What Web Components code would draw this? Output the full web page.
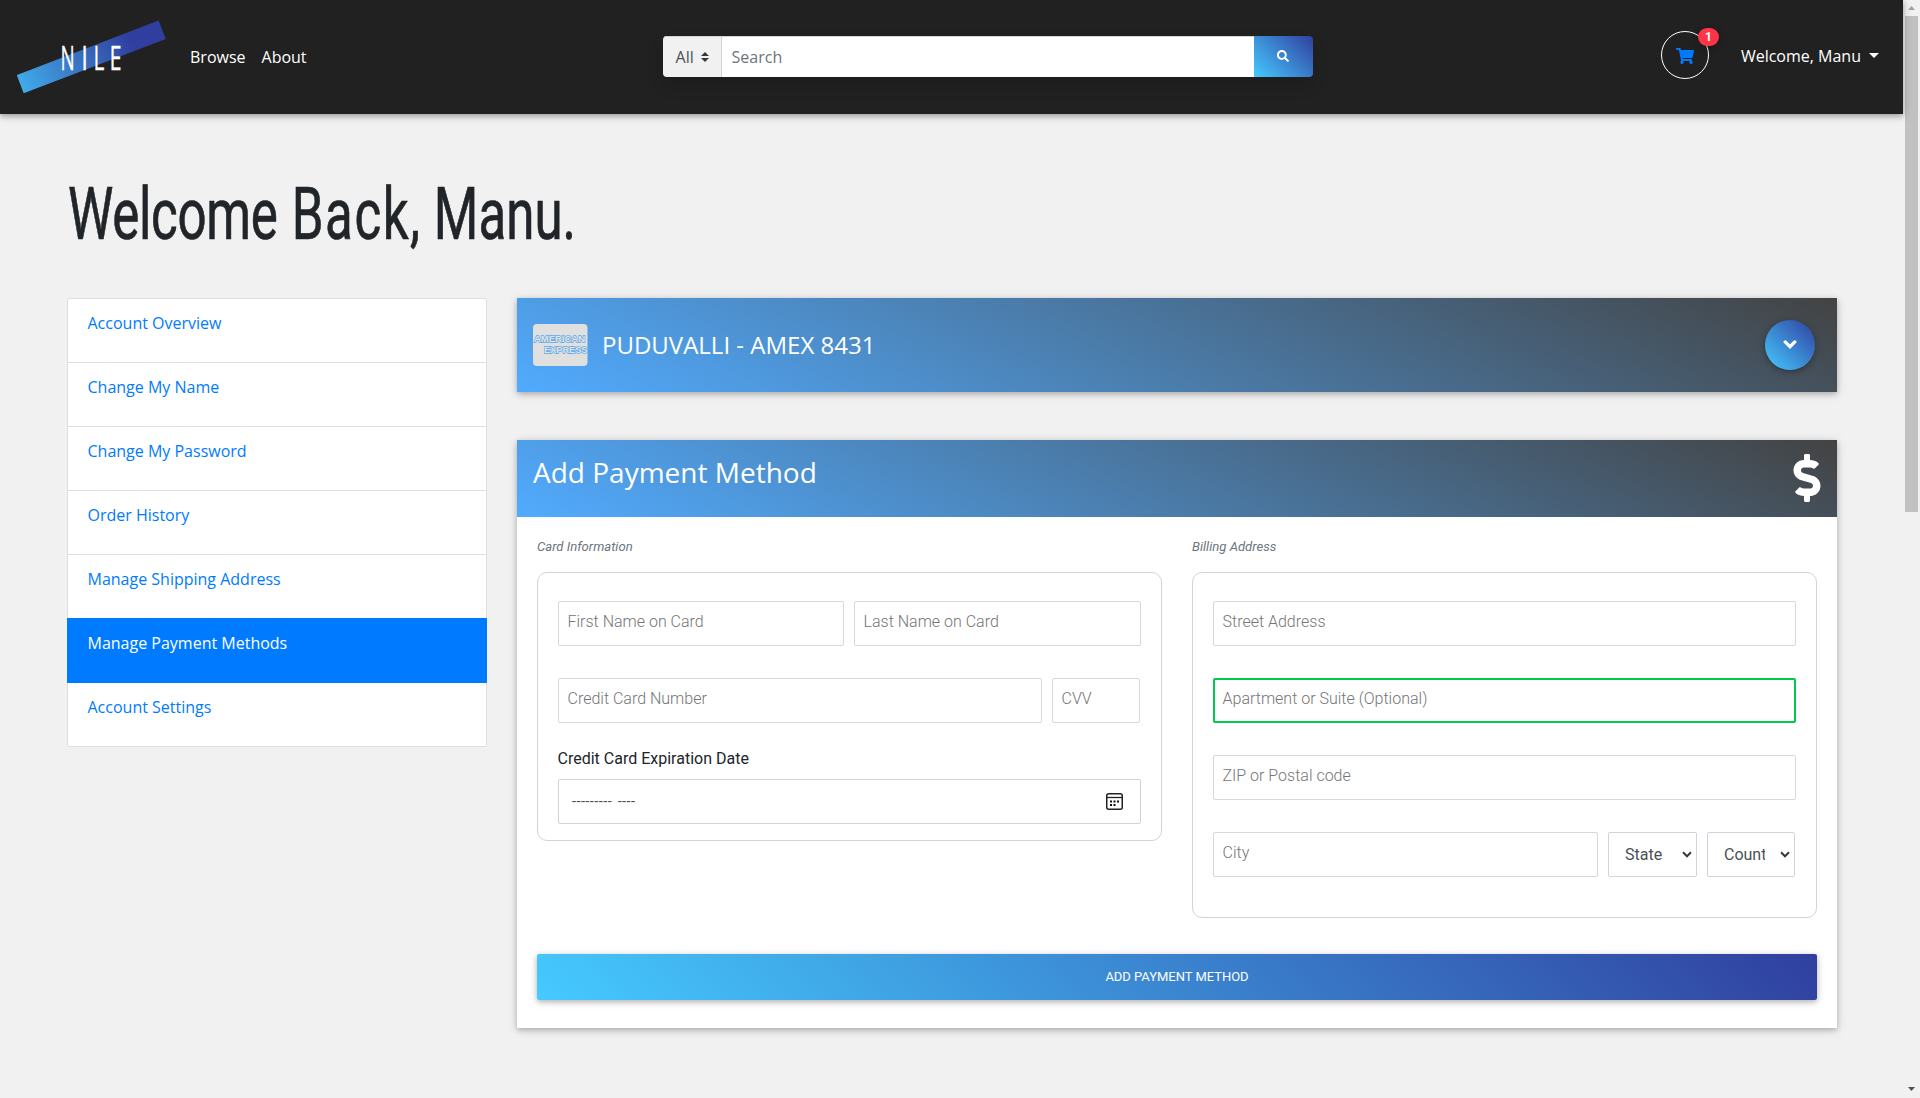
<!DOCTYPE html>
<html lang="en">
<head>
<meta charset="utf-8">
<title>Nile - Manage Payment Methods</title>
<style>
html,body{margin:0;height:100%}
body{display:flex;height:1098px;overflow:hidden;background:#f1f1f1;color:#212529;font:400 16px/24px "Open Sans",sans-serif}
.page{flex:1;min-width:0}
.columns{display:flex;gap:30px;align-items:flex-start;margin:0 66px 0 67px}
.content{flex:1;display:flex;flex-direction:column;gap:48px}
.forms{display:flex;gap:30px;align-items:flex-start}
.forms field-group{flex:1}
</style>
</head>
<body>
<div class="page">
  <nile-header>
    <nav-link slot="nav">Browse</nav-link><nav-link slot="nav">About</nav-link>
    <search-bar slot="search" category="All">Search</search-bar>
    <cart-button slot="account" count="1"></cart-button>
    <user-menu slot="account">Welcome, Manu</user-menu>
  </nile-header>
  <page-title></page-title>
  <div class="columns">
    <account-nav>
      <account-item>Account Overview</account-item>
      <account-item>Change My Name</account-item>
      <account-item>Change My Password</account-item>
      <account-item>Order History</account-item>
      <account-item>Manage Shipping Address</account-item>
      <account-item active>Manage Payment Methods</account-item>
      <account-item>Account Settings</account-item>
    </account-nav>
    <div class="content">
      <saved-card>PUDUVALLI - AMEX 8431</saved-card>
      <payment-panel>
        <span slot="title">Add Payment Method</span>
        <div class="forms">
          <field-group label="Card Information" style="--foot:16px">
            <field-row><text-field style="flex:286">First Name on Card</text-field><text-field style="flex:287">Last Name on Card</text-field></field-row>
            <field-row><text-field style="flex:1">Credit Card Number</text-field><text-field style="flex:0 0 88px;margin-right:1px">CVV</text-field></field-row>
            <month-field label="Credit Card Expiration Date">--------- ----</month-field>
          </field-group>
          <field-group label="Billing Address" style="--foot:40px">
            <field-row><text-field>Street Address</text-field></field-row>
            <field-row><text-field valid>Apartment or Suite (Optional)</text-field></field-row>
            <field-row><text-field>ZIP or Postal code</text-field></field-row>
            <field-row><text-field>City</text-field><select-field style="flex:0 0 89px">State</select-field><select-field style="flex:0 0 88px;margin-right:1px">Country</select-field></field-row>
          </field-group>
        </div>
        <submit-button slot="action">Add Payment Method</submit-button>
      </payment-panel>
    </div>
  </div>
</div>
<page-scrollbar></page-scrollbar>
<script>
const define = (name, render) => customElements.define(name, class extends HTMLElement {
  constructor() { super(); this.attachShadow({ mode: 'open' }); }
  connectedCallback() { this.shadowRoot.innerHTML = render(this); }
});
const SHADOW = 'box-shadow:0 2px 5px rgba(0,0,0,.2),0 2px 10px rgba(0,0,0,.14)';

define('nile-header', () => `<style>
:host{display:flex;align-items:center;height:114px;box-sizing:border-box;background:#212121;color:#fff;position:relative;padding:0 24px 0 17px;box-shadow:0 2px 5px rgba(0,0,0,.26),0 2px 10px rgba(0,0,0,.16)}
nav{display:flex;gap:16px;margin-left:24px}
.account{display:flex;align-items:center;gap:32px;margin-left:auto}
.search{margin-left:356px}
</style><nile-logo></nile-logo><nav><slot name="nav"></slot></nav><div class="search"><slot name="search"></slot></div><div class="account"><slot name="account"></slot></div>`);

define('nile-logo', () => `<style>:host{display:block;height:74px;width:149px}svg{display:block}text{font-family:"Open Sans",sans-serif;font-weight:500}</style>
<svg width="149" height="74" viewBox="17 20 149 74"><defs><linearGradient id="g" gradientUnits="userSpaceOnUse" x1="20" y1="96" x2="128" y2="36"><stop offset="0" stop-color="#42b0ec"/><stop offset="1" stop-color="#303f9f"/></linearGradient></defs>
<path d="M16.700 75 158.600 20.500 165.700 39 23.700 93.300Z" fill="url(#g)"/>
<g fill="#fff" stroke="#fff" stroke-width=".3" font-size="32.500"><text transform="translate(60.600 69.700) scale(.58 1)">N</text><text transform="translate(81.200 69.700) scale(.74 1)">I</text><text transform="translate(93.600 69.700) scale(.64 1)">L</text><text transform="translate(109.500 69.700) scale(.67 1)">E</text></g></svg>`);

define('nav-link', () => `<style>:host{display:block;white-space:nowrap}</style><slot></slot>`);

define('search-bar', el => `<style>
:host{display:flex;width:650px;height:41px;margin-bottom:2px;border-radius:4px;box-shadow:0 8px 16px rgba(0,0,0,.15);color:#495057;overflow:hidden}
.cat{display:flex;align-items:center;gap:7px;width:59px;padding-left:13px;background:#f1f1f1;border:1px solid #ced4da;border-width:1px 1px 0 0;box-sizing:border-box}
.input{flex:1;display:flex;align-items:center;padding-left:10px;background:#fff;color:#6c757d;border-top:1px solid #ced4da}
.go{width:59px;display:flex;align-items:center;justify-content:center;background:linear-gradient(45deg,#45caff,#303f9f)}
</style><div class="cat"><span>${el.getAttribute('category')}</span><svg width="8" height="10" viewBox="0 0 4 5"><path fill="#343a40" d="M2 0 0 2h4zm0 5L0 3h4z"/></svg></div><div class="input"><slot></slot></div>
<div class="go"><svg width="12" height="12" viewBox="0 0 512 512"><path fill="#fff" d="M505 442.700L405.300 343c-4.500-4.500-10.600-7-17-7H372c27.600-35.300 44-79.700 44-128C416 93.100 322.900 0 208 0S0 93.100 0 208s93.100 208 208 208c48.300 0 92.700-16.400 128-44v16.300c0 6.400 2.500 12.500 7 17l99.700 99.700c9.400 9.400 24.600 9.400 33.900 0l28.300-28.300c9.400-9.400 9.400-24.600.1-34zM208 336c-70.700 0-128-57.200-128-128 0-70.700 57.200-128 128-128 70.700 0 128 57.200 128 128 0 70.700-57.200 128-128 128z"/></svg></div>`);

define('cart-button', el => `<style>
:host{display:flex;align-items:center;justify-content:center;position:relative;width:46px;height:46px;border:1px solid #fff;border-radius:50%;margin-bottom:4px}
.badge{position:absolute;left:36px;top:-4px;width:21px;height:18px;border-radius:9px;background:#ff3547;font:700 12px/18px Roboto,sans-serif;text-align:center;box-shadow:0 2px 5px rgba(0,0,0,.16),0 2px 10px rgba(0,0,0,.12)}
svg{margin-top:2px}
</style><svg width="18" height="16" viewBox="0 0 576 512"><path fill="#007bff" d="M528.12 301.319l47.273-208C578.806 78.301 567.391 64 551.990 64H159.208l-9.166-44.810C147.758 8.021 137.930 0 126.529 0H24C10.745 0 0 10.745 0 24v16c0 13.255 10.745 24 24 24h69.883l70.248 343.435C147.325 417.100 136 435.222 136 456c0 30.928 25.072 56 56 56s56-25.072 56-56c0-15.674-6.447-29.835-16.824-40h209.647C430.447 426.165 424 440.326 424 456c0 30.928 25.072 56 56 56s56-25.072 56-56c0-22.172-12.888-41.332-31.579-50.405l5.517-24.276c3.413-15.018-8.002-29.319-23.403-29.319H218.117l-6.545-32h293.145c11.206 0 20.920-7.754 23.403-18.681z"/></svg><span class="badge">${el.getAttribute('count')}</span>`);

define('user-menu', () => `<style>:host{display:flex;align-items:center;gap:8px;margin-bottom:2px;white-space:nowrap}i{border:5px solid transparent;border-top-color:#fff;border-bottom:0;margin-top:-2px}</style><slot></slot><i></i>`);

define('page-title', () => `<style>:host{display:block;margin:55px 0 49px 67px}h1{margin:0;font:400 73px/80px Roboto,sans-serif;height:80px}svg{display:block;overflow:visible}</style>
<h1><svg width="520" height="80"><text transform="scale(.7 1)" y="70" fill="#212529" stroke="#212529" stroke-width=".7"><tspan x="1.500" letter-spacing="-.5">Welcome</tspan> <tspan x="321" letter-spacing="2.200">Back,</tspan> <tspan x="524">Manu.</tspan></text></svg></h1>`);

define('account-nav', () => `<style>:host{display:flex;flex-direction:column;width:418px;border:1px solid #dfdfdf;border-radius:2px;background:#fff}</style><slot></slot>`);
define('account-item', () => `<style>
:host{display:block;height:64px;box-sizing:border-box;padding:12px 19.500px;border-bottom:1px solid #dfdfdf;color:#007bff}
:host(:last-child){border:0;height:63px}
:host([active]){background:#007bff;color:#fff;height:65px;margin:-1px -1px 0;padding:13px 20.500px;border-color:#007bff}
</style><slot></slot>`);

define('saved-card', () => `<style>
:host{display:flex;align-items:center;height:94px;box-sizing:border-box;padding:0 22px 0 16px;background:linear-gradient(25deg,#51abff,#434343);color:#fff;${SHADOW}}
.name{margin-left:14px;font-size:24px;line-height:30px;flex:1}
.toggle{width:50px;height:50px;border-radius:50%;display:flex;align-items:center;justify-content:center;background:linear-gradient(45deg,#45caff,#303f9f);${SHADOW}}
text{font:700 9.500px "Liberation Sans",sans-serif;fill:#e4e4e4;stroke:#5ba8ea;stroke-width:1.300px;paint-order:stroke}
</style><svg width="55" height="42" viewBox="0 0 55 42"><clipPath id="c"><rect width="54.500" height="42" rx="4"/></clipPath><g clip-path="url(#c)"><rect width="55" height="42" fill="#e0e0e0"/><text x="1" y="17.500" textLength="51" lengthAdjust="spacingAndGlyphs">AMERICAN</text><text x="11" y="28.800" textLength="43.500" lengthAdjust="spacingAndGlyphs">EXPRESS</text></g></svg>
<div class="name"><slot></slot></div>
<div class="toggle"><svg width="14" height="10" viewBox="0 0 14 10"><path d="M2.200 1.900 7 6.700l4.800-4.800" fill="none" stroke="#fff" stroke-width="3.300" stroke-linecap="round"/></svg></div>`);

define('payment-panel', () => `<style>
:host{display:block;height:588px;background:#fff;${SHADOW}}
header{display:flex;justify-content:space-between;align-items:flex-start;height:77px;box-sizing:border-box;padding:13px 16px 0;background:linear-gradient(25deg,#51abff,#434343);color:#fff;font-size:28px;line-height:38px}
header svg{margin-top:1px}
.body{padding:17px 20px 0;font-family:Roboto,sans-serif;font-weight:300}
.action{margin-top:36px}
</style><header><slot name="title"></slot><svg width="28" height="48" viewBox="0 0 288 512"><path fill="#fff" d="M209.200 233.400l-108-31.600C88.700 198.200 80 186.500 80 173.500c0-16.300 13.200-29.500 29.500-29.500h66.300c12.200 0 24.200 3.700 34.200 10.500 6.100 4.100 14.300 3.100 19.500-2l34.800-34c7.100-6.900 6.100-18.400-1.800-24.500C238 74.800 207.400 64.100 176 64V16c0-8.800-7.200-16-16-16h-32c-8.800 0-16 7.200-16 16v48h-2.500C45.800 64-5.400 118.700.5 183.600c4.200 46.100 39.400 83.600 83.800 96.600l102.500 30c12.500 3.700 21.200 15.300 21.200 28.300 0 16.300-13.200 29.500-29.500 29.500h-66.300C100 368 88 364.300 78 357.500c-6.100-4.100-14.300-3.100-19.500 2l-34.800 34c-7.100 6.900-6.100 18.400 1.800 24.500 24.500 19.200 55.100 29.900 86.500 30v48c0 8.800 7.200 16 16 16h32c8.800 0 16-7.200 16-16v-48.200c46.600-.9 90.300-28.600 105.700-72.700 21.500-61.600-14.600-124.800-72.500-141.700z"/></svg></header>
<div class="body"><slot></slot><div class="action"><slot name="action"></slot></div></div>`);

define('field-group', el => `<style>
:host{display:block}
em{display:block;font-size:13.100px;line-height:24px;height:37px;padding-top:1px;color:#6c757d;font-weight:400}
.box{display:flex;flex-direction:column;gap:32px;border:1px solid #d3d3d3;border-radius:10px;padding:28px 20px var(--foot)}
</style><em>${el.getAttribute('label')}</em><div class="box"><slot></slot></div>`);

define('field-row', () => `<style>:host{display:flex;gap:10px}</style><slot></slot>`);

define('text-field', () => `<style>
:host{display:block;flex:1;height:45px;box-sizing:border-box;border:1px solid #d8d8dc;border-radius:2px;padding:8px 8.500px;color:#757575;white-space:nowrap}
:host([valid]){border:2px solid #00c851;padding:7px 7.500px}
</style><slot></slot>`);

define('month-field', el => `<style>
:host{display:block;margin-top:-9px}
label{display:block;color:#212529;font-weight:400;height:33px;line-height:26px;margin-left:-.5px}
.in{display:flex;align-items:center;justify-content:space-between;height:45px;box-sizing:border-box;border:1px solid #ced4da;border-radius:2px;padding:0 17px 0 13px;color:#495057}
.in span{font-size:14.500px;font-weight:400;letter-spacing:.45px;word-spacing:1.500px;margin-top:1px}
</style><label>${el.getAttribute('label')}</label><div class="in"><span><slot></slot></span>
<svg width="17" height="17" viewBox="0 0 17 17"><rect x=".75" y=".75" width="15.500" height="15.500" rx="2" fill="none" stroke="#222" stroke-width="1.500"/><path d="M1 4.500h15" stroke="#222" stroke-width="1.300"/><path d="M4 8.500h2m1.500 0h2m1.500 0h2M4 12h2m1.500 0h2" stroke="#111" stroke-width="2"/></svg></div>`);

define('select-field', () => `<style>
:host{display:flex;align-items:center;justify-content:space-between;height:45px;box-sizing:border-box;border:1px solid #ced4da;border-radius:2px;padding:0 4px 0 16px;color:#495057;font-weight:400}
span{width:41px;overflow:hidden;white-space:nowrap}
</style><span><slot></slot></span><svg width="10" height="7" viewBox="0 0 10 7"><path d="M1 1.300 5 5.300l4-4" fill="none" stroke="#343a40" stroke-width="2"/></svg>`);

define('submit-button', () => `<style>:host{display:block;height:46px;border-radius:2px;background:linear-gradient(45deg,#45caff,#303f9f);color:#fff;font:400 12.960px/45px Roboto,sans-serif;text-align:center;text-transform:uppercase;${SHADOW}}</style><slot></slot>`);

define('page-scrollbar', () => `<style>
:host{display:flex;flex-direction:column;align-items:center;width:17px;height:1098px;background:#f1f1f1}
svg{display:block}.thumb{width:13px;height:496px;background:#c1c1c1}.rest{flex:1}
</style><svg width="17" height="16"><path d="M5 10h7L8.500 6z" fill="#a3a3a3"/></svg><div class="thumb"></div><div class="rest"></div><svg width="17" height="17"><path d="M5 6h7L8.500 10z" fill="#505050"/></svg>`);
</script>
</body>
</html>
